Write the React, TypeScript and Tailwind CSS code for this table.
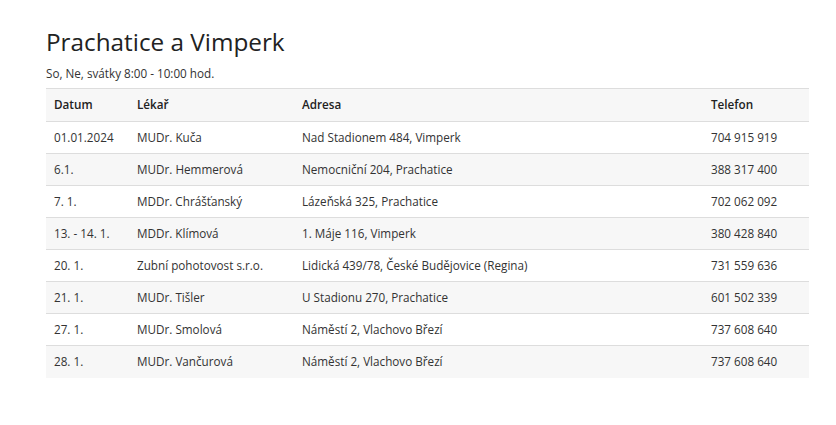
import React from "react";

const rows = [
  ["01.01.2024", "MUDr. Kuča", "Nad Stadionem 484, Vimperk", "704 915 919"],
  ["6.1.", "MUDr. Hemmerová", "Nemocniční 204, Prachatice", "388 317 400"],
  ["7. 1.", "MDDr. Chrášťanský", "Lázeňská 325, Prachatice", "702 062 092"],
  ["13. - 14. 1.", "MDDr. Klímová", "1. Máje 116, Vimperk", "380 428 840"],
  ["20. 1.", "Zubní pohotovost s.r.o.", "Lidická 439/78, České Budějovice (Regina)", "731 559 636"],
  ["21. 1.", "MUDr. Tišler", "U Stadionu 270, Prachatice", "601 502 339"],
  ["27. 1.", "MUDr. Smolová", "Náměstí 2, Vlachovo Březí", "737 608 640"],
  ["28. 1.", "MUDr. Vančurová", "Náměstí 2, Vlachovo Březí", "737 608 640"],
];

export default function App() {
  return (
    <div
      className="bg-white text-[#333] pl-[46px] pr-[27px] pt-[26px] h-[425px] overflow-hidden"
      style={{ fontFamily: '"Open Sans", sans-serif' }}
    >
      <h1 className="text-[24.3px] leading-[32px] font-normal text-[#222]">Prachatice a Vimperk</h1>
      <p className="text-[11.7px] leading-[18px] mt-[6px] mb-[6px]">So, Ne, svátky 8:00 - 10:00 hod.</p>
      <table className="w-full border-collapse text-[11.7px]">
        <colgroup>
          <col className="w-[83px]" />
          <col className="w-[165px]" />
          <col className="w-[409px]" />
          <col />
        </colgroup>
        <thead>
          <tr className="bg-[#f7f7f7] border-t border-b border-[#dddddd]">
            <th className="text-left font-semibold px-2 h-[33px] text-[#222]">Datum</th>
            <th className="text-left font-semibold px-2 text-[#222]">Lékař</th>
            <th className="text-left font-semibold px-2 text-[#222]">Adresa</th>
            <th className="text-left font-semibold px-2 text-[#222]">Telefon</th>
          </tr>
        </thead>
        <tbody>
          {rows.map((r, i) => (
            <tr
              key={i}
              className={
                (i % 2 === 1 ? "bg-[#f7f7f7] " : "bg-white ") +
                (i < rows.length - 1 ? "border-b border-[#dddddd]" : "")
              }
            >
              {r.map((c, j) => (
                <td key={j} className="px-2 h-[32px] align-middle">
                  {c}
                </td>
              ))}
            </tr>
          ))}
        </tbody>
      </table>
    </div>
  );
}
